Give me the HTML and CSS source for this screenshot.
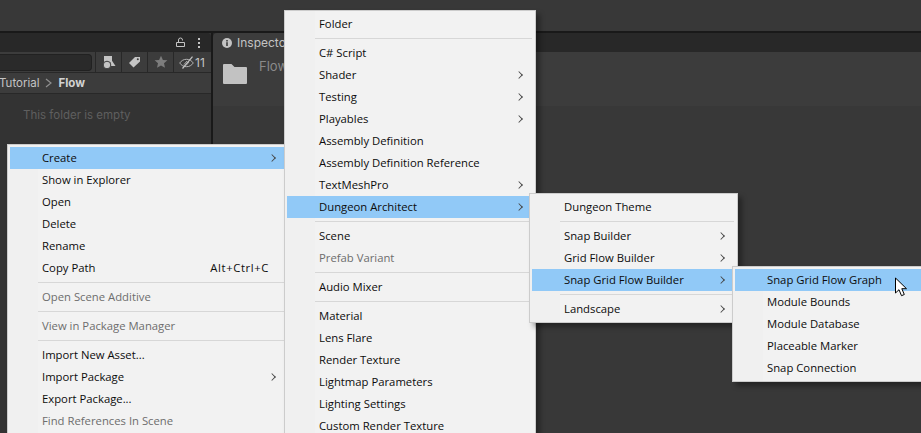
FILE: index.html
```html
<!DOCTYPE html>
<html lang="en">
<head>
    <meta charset="UTF-8">
    <meta name="viewport" content="width=device-width, initial-scale=1.0">
    <title>Create menu</title>
    <link rel="stylesheet" href="styles.css">
</head>
<body>
    <div id="editor">
        <div class="topbar"></div>
        <div class="panels">
            <div class="project">
                <div class="tabbar">
                    <svg class="lock" width="12" height="12" viewBox="0 0 12 12"><path d="M1.500 5.500h8v4h-8zM3.500 5.500V3a2 2 0 0 1 4 0v.5" fill="none" stroke="#c4c4c4"/></svg>
                    <div class="dots"><span></span><span></span><span></span></div>
                </div>
                <div class="toolbar">
                    <div class="search"></div>
                    <div class="tool">
                        <svg width="14" height="15" viewBox="0 0 14 15"><rect x="2" y="1" width="8" height="6.500" fill="#c4c4c4"/><path d="M9.500 5l4 6H7.500z" fill="#c4c4c4"/><circle cx="5" cy="10" r="3.800" fill="#c4c4c4" stroke="#3c3c3c"/></svg>
                    </div>
                    <div class="tool">
                        <svg width="13" height="12" viewBox="0 0 13 12"><path d="M7 1h5v4.500L5.500 11.500 1 7z" fill="#c4c4c4"/><circle cx="9.800" cy="3.200" r="1" fill="#3c3c3c"/></svg>
                    </div>
                    <div class="tool">
                        <svg width="14" height="14" viewBox="0 0 14 14"><path d="M7 .7l1.900 4.200 4.500.4-3.400 3 1 4.500L7 10.500l-4 2.300 1-4.500-3.400-3 4.500-.4z" fill="#7d7d7d"/></svg>
                    </div>
                    <div class="tool tool-wide">
                        <svg width="15" height="13" viewBox="0 0 15 13"><path d="M.7 7C2.500 4.500 4.700 3.300 7.500 3.300S12.500 4.500 14.300 7c-1.800 2.500-4 3.700-6.800 3.700S2.500 9.500.7 7z" fill="none" stroke="#b4b4b4"/><path d="M3.500 12.500L13.500.7" stroke="#c4c4c4" stroke-width="1.200"/><path d="M5 8.500L8 5M7 9.500l3-3.500" stroke="#a8a8a8"/></svg>
                        <span>11</span>
                    </div>
                </div>
                <div class="crumbs">
                    <span>Tutorial</span>
                    <svg width="7" height="10" viewBox="0 0 7 10"><path d="M1 1l5 4-5 4" fill="none" stroke="#8f8f8f" stroke-width="1.200"/></svg>
                    <b>Flow</b>
                </div>
                <p class="empty">This folder is empty</p>
            </div>
            <div class="inspector">
                <div class="inspector-bar">
                    <div class="inspector-tab">
                        <svg width="10" height="10" viewBox="0 0 10 10"><circle cx="5" cy="5" r="5" fill="#c4c4c4"/><rect x="4.200" y="4.200" width="1.600" height="3.800" fill="#3c3c3c"/><rect x="4.200" y="2" width="1.600" height="1.500" fill="#3c3c3c"/></svg>
                        <span>Inspector</span>
                    </div>
                </div>
                <div class="inspector-head">
                    <svg width="24" height="20" viewBox="0 0 24 20"><path d="M1 0h7.500l3 3H23a1 1 0 0 1 1 1v15a1 1 0 0 1-1 1H1a1 1 0 0 1-1-1V1a1 1 0 0 1 1-1z" fill="#c2c2c2"/></svg>
                    <span>Flow</span>
                </div>
            </div>
        </div>
    </div>

    <!-- context menus, left to right -->
    <div class="menu menu-asset">
        <div class="item active arrow">Create</div>
        <div class="item">Show in Explorer</div>
        <div class="item">Open</div>
        <div class="item">Delete</div>
        <div class="item">Rename</div>
        <div class="item">Copy Path<span class="shortcut">Alt+Ctrl+C</span></div>
        <div class="sep"></div>
        <div class="item off">Open Scene Additive</div>
        <div class="sep"></div>
        <div class="item off">View in Package Manager</div>
        <div class="sep"></div>
        <div class="item">Import New Asset...</div>
        <div class="item arrow">Import Package</div>
        <div class="item">Export Package...</div>
        <div class="item off">Find References In Scene</div>
    </div>

    <div class="menu menu-create">
        <div class="item">Folder</div>
        <div class="sep"></div>
        <div class="item">C# Script</div>
        <div class="item arrow">Shader</div>
        <div class="item arrow">Testing</div>
        <div class="item arrow">Playables</div>
        <div class="item">Assembly Definition</div>
        <div class="item">Assembly Definition Reference</div>
        <div class="item arrow">TextMeshPro</div>
        <div class="item active arrow">Dungeon Architect</div>
        <div class="sep"></div>
        <div class="item">Scene</div>
        <div class="item off">Prefab Variant</div>
        <div class="sep"></div>
        <div class="item">Audio Mixer</div>
        <div class="sep"></div>
        <div class="item">Material</div>
        <div class="item">Lens Flare</div>
        <div class="item">Render Texture</div>
        <div class="item">Lightmap Parameters</div>
        <div class="item">Lighting Settings</div>
        <div class="item">Custom Render Texture</div>
    </div>

    <div class="menu menu-dungeon">
        <div class="item">Dungeon Theme</div>
        <div class="sep"></div>
        <div class="item arrow">Snap Builder</div>
        <div class="item arrow">Grid Flow Builder</div>
        <div class="item active arrow">Snap Grid Flow Builder</div>
        <div class="sep"></div>
        <div class="item arrow">Landscape</div>
    </div>

    <div class="menu menu-snap">
        <div class="item active">Snap Grid Flow Graph</div>
        <div class="item">Module Bounds</div>
        <div class="item">Module Database</div>
        <div class="item">Placeable Marker</div>
        <div class="item">Snap Connection</div>
    </div>

    <svg class="cursor" width="14" height="21" viewBox="0 0 14 21"><path d="M1.500 1v15l3.500-3.300 2.500 6 2.800-1.200-2.500-5.800h4.700z" fill="#fff" stroke="#000"/></svg>
</body>
</html>
```

FILE: styles.css
```css
body {
    margin: 0;
    width: 921px;
    height: 433px;
    overflow: hidden;
    position: relative;
    background: #383838;
    font-family: "Inter", sans-serif;
    font-size: 12px;
}

#editor {
    height: 433px;
    display: flex;
    flex-direction: column;
}

.topbar {
    height: 31px;
    flex-shrink: 0;
    background: #383838;
}

.panels {
    flex: 1;
    display: flex;
    gap: 2px;
    background: #191919;
    padding-top: 2px;
}

.project {
    width: 211px;
    flex-shrink: 0;
    background: #333333;
}

.tabbar {
    height: 19px;
    background: #282828;
    border-top-right-radius: 4px;
    display: flex;
    align-items: center;
    justify-content: flex-end;
    gap: 11px;
    padding-right: 11px;
}

.dots {
    display: flex;
    flex-direction: column;
    gap: 2px;
}

.dots span {
    width: 2px;
    height: 2px;
    background: #c4c4c4;
}

.toolbar {
    height: 20px;
    background: #3c3c3c;
    display: flex;
    border-bottom: 1px solid #282828;
}

.search {
    width: 91px;
    height: 15px;
    margin: 2px 3px 0 0;
    background: #2a2a2a;
    border: 1px solid #212121;
    border-left: 0;
    border-radius: 0 4px 4px 0;
}

.tool {
    width: 25px;
    border-left: 1px solid #282828;
    display: flex;
    align-items: center;
    justify-content: center;
}

.tool-wide {
    flex: 1;
    gap: 1px;
    justify-content: flex-start;
    padding-left: 5px;
    color: #c4c4c4;
}

.crumbs {
    height: 20px;
    background: #3c3c3c;
    border-bottom: 1px solid #282828;
    display: flex;
    align-items: center;
    gap: 6px;
    color: #c4c4c4;
    font-size: 11.5px;
}

.crumbs span {
    margin-left: -1px;
}

.crumbs b {
    font-weight: 700;
    color: #d2d2d2;
}

.empty {
    margin: 14px 0 0 23px;
    color: #5f5f5f;
    font-size: 11.5px;
}

.inspector {
    flex: 1;
    background: #383838;
    overflow: hidden;
}

.inspector-bar {
    height: 19px;
    background: #282828;
}

.inspector-tab {
    width: 90px;
    height: 19px;
    background: #3c3c3c;
    border-radius: 4px 4px 0 0;
    display: flex;
    align-items: center;
    gap: 5px;
    padding-left: 9px;
    color: #c4c4c4;
}

.inspector-head {
    height: 54px;
    box-sizing: border-box;
    background: #3c3c3c;
    display: flex;
    align-items: flex-start;
    gap: 12px;
    padding: 12px 0 0 10px;
    color: #8a8a8a;
    font-size: 13px;
}

.inspector-head span {
    margin-top: -6px;
}

/* menus sit over the editor */
.menu {
    position: absolute;
    box-sizing: border-box;
    padding: 2px;
    background: linear-gradient(to right, #f0f0f0 30px, #f2f2f2 30px);
    border: 1px solid #cccccc;
    box-shadow: 4px 4px 5px rgba(0, 0, 0, 0.35);
    font-family: "Open Sans", sans-serif;
    font-size: 11.3px;
    color: #0c0c0c;
}

.menu-asset { left: 7px; top: 144px; width: 282px; }
.menu-create { left: 284px; top: 10px; width: 252px; }
.menu-dungeon { left: 529px; top: 193px; width: 209px; }
.menu-snap { left: 732px; top: 266px; width: 200px; }

.item {
    height: 22px;
    line-height: 22px;
    padding-left: 32px;
    position: relative;
    white-space: nowrap;
}

.item.active {
    background: #91c9f7;
}

.item.off {
    color: #6d6d6d;
}

.item.arrow::after {
    content: "";
    position: absolute;
    right: 11px;
    top: 8px;
    width: 5px;
    height: 5px;
    border-top: 1px solid #444;
    border-right: 1px solid #444;
    transform: rotate(45deg) scale(0.9);
}

.shortcut {
    position: absolute;
    right: 17px;
    letter-spacing: 0.6px;
}

.sep {
    height: 1px;
    margin: 3px 1px 3px 28px;
    background: #d7d7d7;
}

.cursor {
    position: absolute;
    left: 894px;
    top: 277px;
}
```
